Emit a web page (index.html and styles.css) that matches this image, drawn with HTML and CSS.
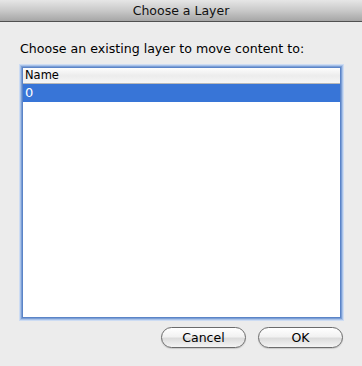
FILE: index.html
```html
<!DOCTYPE html>
<html lang="en">
<head>
    <meta charset="UTF-8">
    <title>Choose a Layer</title>
    <link rel="stylesheet" href="styles.css">
</head>
<body>
    <div class="window">
        <div class="title-bar">Choose a Layer</div>

        <div class="content">
            <div class="prompt">Choose an existing layer to move content to:</div>

            <div class="list-box">
                <div class="list-header">Name</div>
                <div class="list-rows">
                    <div class="list-row selected">0</div>
                </div>
            </div>

            <div class="buttons">
                <button class="push-button">Cancel</button>
                <button class="push-button">OK</button>
            </div>
        </div>
    </div>
</body>
</html>
```

FILE: styles.css
```css
* {
    margin: 0;
    padding: 0;
    box-sizing: border-box;
}

body {
    width: 362px;
    height: 366px;
    background: #ececec;
    font-family: 'DejaVu Sans', sans-serif;
    color: #000;
    overflow: hidden;
}

.window {
    display: flex;
    flex-direction: column;
    height: 100%;
}

.title-bar {
    height: 22px;
    line-height: 21px;
    text-align: center;
    font-size: 12.5px;
    color: #111;
    background: linear-gradient(#e6e6e6, #c9c9c9 50%, #a6a6a6);
    border-bottom: 1px solid #515151;
}

.content {
    display: flex;
    flex-direction: column;
    padding: 19px 18px 0 19px;
}

.prompt {
    font-size: 12.6px;
    height: 23px;
    padding-left: 1px;
}

.list-box {
    height: 253px;
    background: #fff;
    border: 1px solid #7c9fd6;
    box-shadow: 0 0 0 1px #a9c2e8, 0 0 0 2px #cddcf3;
    margin: 2px;
    display: flex;
    flex-direction: column;
    outline: 1px solid #5b84c7;
    outline-offset: -2px;
}

.list-header {
    height: 17px;
    line-height: 16px;
    font-size: 11.5px;
    padding-left: 3px;
    background: linear-gradient(#ffffff, #ececec 55%, #f6f6f6);
    border-bottom: 1px solid #b8b8b8;
    border-right: 1px solid #9a9a9a;
}

.list-row {
    height: 18px;
    line-height: 18px;
    font-size: 13px;
    padding-left: 3px;
}

.list-row.selected {
    background: #3875d7;
    color: #fff;
}

.buttons {
    display: flex;
    justify-content: flex-end;
    gap: 12px;
    margin-top: 6px;
    padding-right: 1px;
}

.push-button {
    width: 85px;
    height: 21px;
    border: 1px solid #6b6b6b;
    border-radius: 11px;
    background: linear-gradient(#ffffff, #f2f2f2 45%, #dcdcdc 55%, #f4f4f4);
    box-shadow: 0 1px 1px rgba(0, 0, 0, 0.15);
    font-family: 'DejaVu Sans', sans-serif;
    font-size: 12.5px;
    color: #000;
}
```
